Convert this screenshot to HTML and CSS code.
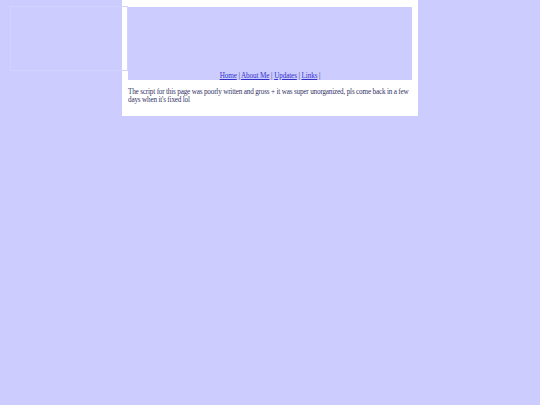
FILE: index.html
```html
<!DOCTYPE html>
<html>
<head>
<meta charset="utf-8">
<link rel="stylesheet" href="styles.css">
</head>
<body>
<div class="frame"></div>
<div class="page">
  <div class="header">
    <nav class="nav"><a href="#">Home</a> | <a href="#">About Me</a> | <a href="#">Updates</a> | <a href="#">Links</a> |</nav>
  </div>
  <p class="msg">The script for this page was poorly written and gross + it was super unorganized, pls come back in a few days when it's fixed lol</p>
</div>
</body>
</html>
```
FILE: styles.css
```css
html, body {
  margin: 0;
  padding: 0;
  background: #ccccff;
  font-family: "Liberation Serif", "Times New Roman", serif;
  font-size: 7.2px;
  color: #333366;
}
body {
  position: relative;
  min-height: 405px;
}
.frame {
  position: absolute;
  left: 10px;
  top: 6px;
  width: 116px;
  height: 63px;
  border: 1px solid #d3d3ff;
  pointer-events: none;
}
.page {
  width: 284px;
  margin: 0 auto;
  background: #ffffff;
  padding: 7px 6px 12px 6px;
}
.header {
  background: #ccccff;
  height: 73px;
  display: flex;
  align-items: flex-end;
  justify-content: center;
}
.nav {
  line-height: 8px;
  letter-spacing: -0.12px;
}
.nav a {
  color: #3333cc;
}
.msg {
  margin: 8px 0 0 0;
  line-height: 8px;
  letter-spacing: -0.19px;
}
```
